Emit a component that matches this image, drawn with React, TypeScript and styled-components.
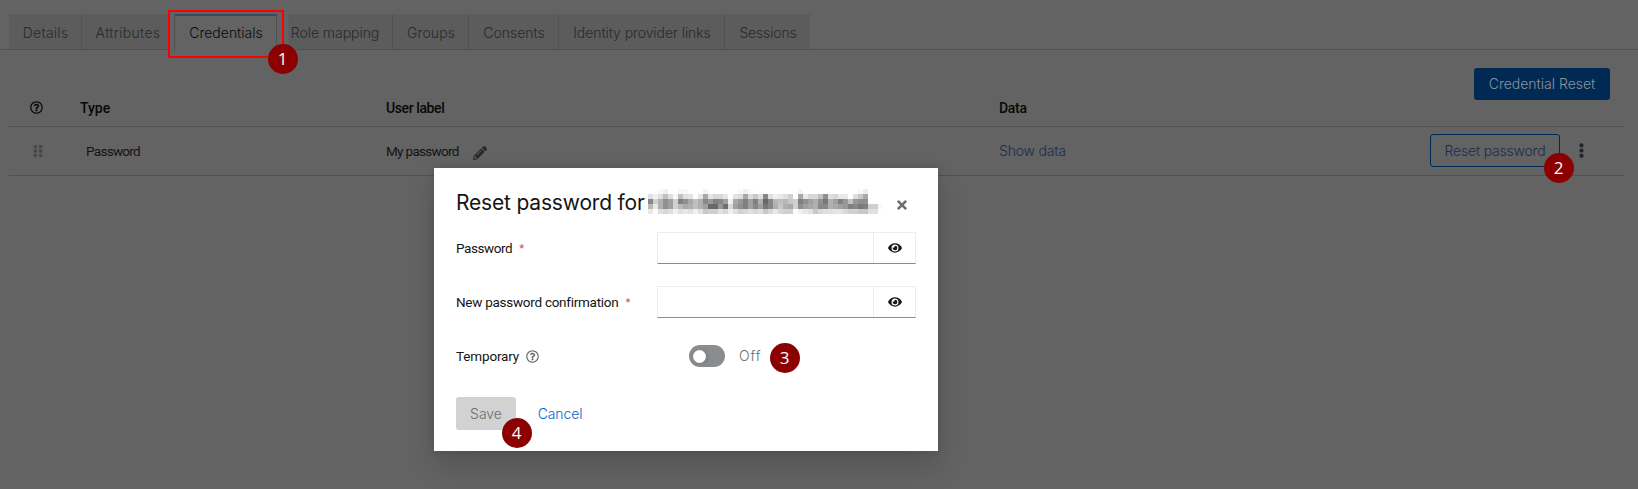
import React from 'react';
import styled, { createGlobalStyle, css } from 'styled-components';
import {
  FaEllipsisV,
  FaEye,
  FaGripVertical,
  FaPencilAlt,
  FaRegQuestionCircle,
  FaTimes,
} from 'react-icons/fa';

const GlobalStyle = createGlobalStyle`
  *, *::before, *::after { box-sizing: border-box; }
  body { margin: 0; background: #636363; }
  button, input { font: inherit; margin: 0; padding: 0; }
`;

const display = css`
  font-family: Inter, 'Liberation Sans', sans-serif;
  font-size: 14px;
  font-weight: 300;
`;

const Page = styled.div`
  position: relative;
  display: flex;
  flex-direction: column;
  height: 489px;
  overflow: hidden;
  background: #636363;
  color: #0b0b0b;
  font: 400 13.5px/20px Roboto, 'Liberation Sans', sans-serif;
`;

const Text = styled.span<{ $spacing?: number }>`
  letter-spacing: ${(p) => p.$spacing ?? 0}px;
  white-space: nowrap;
`;

const Tabs = styled.nav`
  display: flex;
  height: 50px;
  padding: 14px 0 0 9px;
  border-bottom: 1px solid #515151;
`;

const Tab = styled.button<{ $width: number; $active?: boolean; $last?: boolean }>`
  ${display}
  display: flex;
  align-items: center;
  justify-content: center;
  flex: none;
  width: ${(p) => p.$width}px;
  padding: 2px 0 0 1px;
  border: 0;
  border-right: ${(p) => (p.$last ? 0 : 1)}px solid #515151;
  background: #5c5c5c;
  color: #292a2c;

  ${Text} {
    position: relative;
    z-index: 2;
  }

  ${(p) =>
    p.$active &&
    css`
      position: relative;
      z-index: 2;
      height: 36px;
      padding-bottom: 2px;
      border-top: 2px solid #3a4a66;
      border-left: 1px solid #515151;
      background: #636363;
      color: #090909;
    `}
`;

const Highlight = styled.div`
  position: absolute;
  z-index: 1;
  left: 168px;
  top: 10px;
  width: 116px;
  height: 48px;
  border: 2px solid #ff0000;
  background: #636363;
  box-shadow: 5px 0 0 -0.5px #636363;
`;

const Toolbar = styled.div`
  display: flex;
  justify-content: flex-end;
  height: 41px;
  padding: 18px 28px 0 0;
`;

const Button = styled.button<{ $kind: 'primary' | 'outline' | 'disabled' | 'link'; $width: number }>`
  ${display}
  display: flex;
  align-items: center;
  justify-content: center;
  flex: none;
  width: ${(p) => p.$width}px;
  height: 33px;
  border: 0;
  border-radius: 3px;
  background: transparent;

  ${(p) =>
    p.$kind === 'primary' &&
    css`
      height: 32px;
      background: #002a53;
      color: #8c939b;
    `}
  ${(p) =>
    p.$kind === 'outline' &&
    css`
      padding-top: 1px;
      border: 1px solid #002a53;
      color: #1c2c4e;
    `}
  ${(p) =>
    p.$kind === 'disabled' &&
    css`
      background: #d2d2d2;
      color: #6a6e73;
    `}
  ${(p) =>
    p.$kind === 'link' &&
    css`
      color: #0066cc;
    `}
`;

const Table = styled.div`
  display: flex;
  flex-direction: column;
  margin: 0 14px 0 9px;
`;

const Row = styled.div<{ $header?: boolean }>`
  display: grid;
  grid-template-columns: 71px 306px 613px 1fr;
  align-items: center;
  height: ${(p) => (p.$header ? 36 : 49)}px;
  padding-bottom: 1px;
  border-bottom: 1px solid #515151;
  font-weight: ${(p) => (p.$header ? 500 : 400)};
  font-size: ${(p) => (p.$header ? 14 : 13.5)}px;
  color: ${(p) => (p.$header ? '#080808' : '#141414')};
`;

const IconCell = styled.span`
  display: flex;
  padding-left: 21px;
`;

const HelpCell = styled(IconCell)`
  padding-bottom: 2px;
`;

const GripCell = styled(IconCell)`
  padding-left: 22px;
  color: #484848;
`;

const TypeCell = styled.span`
  padding-left: 6px;
`;

const LabelCell = styled.span`
  display: flex;
  align-items: center;
  gap: 14px;
`;

const PencilBox = styled.span`
  display: flex;
  padding-top: 5px;
  color: #292a2c;
`;

const DataCell = styled.span`
  display: flex;
  align-items: center;
  justify-content: space-between;
`;

const DataLink = styled.a`
  ${display}
  color: #1c2c4e;
`;

const Actions = styled.span`
  display: flex;
  align-items: center;
  gap: 14px;
  padding-right: 35px;
  color: #252525;
`;

const Modal = styled.section`
  position: absolute;
  z-index: 3;
  left: 434px;
  top: 168px;
  width: 504px;
  height: 283px;
  padding: 19px 22px 0;
  background: #fff;
  color: #151515;
  box-shadow: 0 14px 28px rgba(0, 0, 0, 0.16), 0 0 7px rgba(0, 0, 0, 0.1);
`;

const ModalHeader = styled.header`
  display: flex;
  height: 34px;
`;

const Title = styled.h1`
  flex: none;
  width: 191px;
  margin: 0;
  font: 400 21px/31px Inter, 'Liberation Sans', sans-serif;
`;

const Mosaic = styled.svg`
  flex: none;
  margin: 2px 0 0 1px;
`;

const CloseButton = styled.button`
  display: flex;
  align-self: flex-start;
  margin: 11px 0 0 12px;
  border: 0;
  background: none;
  color: #6a6e73;
`;

const Field = styled.div`
  display: flex;
  align-items: center;
  height: 54px;
`;

const FieldLabel = styled.label`
  display: flex;
  align-items: center;
  width: 201px;
`;

const Required = styled.span`
  padding: 0 0 1px 7px;
  color: #d4483c;
  font-size: 11.5px;
`;

const HelpIcon = styled.span`
  display: flex;
  padding-left: 7px;
  color: #6a6e73;
`;

const InputGroup = styled.div`
  display: flex;
  width: 259px;
  height: 32px;
  border: 1px solid #ededed;
  border-bottom-color: #8a8d90;
`;

const Input = styled.input`
  width: 215px;
  border: 0;
  outline: 0;
  background: transparent;
`;

const Reveal = styled.button`
  display: flex;
  align-items: center;
  justify-content: center;
  flex: 1;
  border: 0;
  border-left: 1px solid #ededed;
  background: transparent;
  color: #151515;
`;

const Toggle = styled.span`
  display: flex;
  align-items: center;
  width: 36px;
  height: 22px;
  margin-left: 32px;
  padding-left: 4px;
  border-radius: 11px;
  background: #8a8d90;

  &::after {
    content: '';
    width: 13px;
    height: 13px;
    border-radius: 50%;
    background: #fff;
    box-shadow: 1px 1px 5px rgba(0, 0, 0, 0.16);
  }
`;

const ToggleText = styled.span`
  ${display}
  margin-left: 14px;
  color: #6a6e73;
`;

const Footer = styled.footer`
  display: flex;
  gap: 7px;
  padding-top: 14px;
`;

const Badge = styled.span<{ $x: number; $y: number }>`
  position: absolute;
  z-index: 4;
  left: ${(p) => p.$x}px;
  top: ${(p) => p.$y}px;
  display: flex;
  align-items: center;
  justify-content: center;
  width: 30px;
  height: 30px;
  border-radius: 50%;
  background: #8b0000;
  color: #fff;
  font: 400 17px/30px 'Open Sans', 'Liberation Sans', sans-serif;
`;

/* Grey level of every cell of the pixelated user name, two hex digits each. */
const nameCells = [
  'fffff8f0fffff8f8fffffff5fffffffffffffaf0fafffffffffffffffffff5fffffffffffffffffffffff8eeffffff',
  'e0f0e0c0e0f8c0e0e4fce6a8e4d8d8e6ffe4dca8dcc8e088e0f0e8e0d0ffa8e8d8d8c090e0d8e8e8ffdcc8a8ffffff',
  '88d0b090a0d08090a8c0b088988088a0f0a89880a080b06888b8c0b8c8d08090a0b09078b0a08098c0989090ffffff',
  'b8e8b090a0d0b8a8b0c0b0a068689870d8a09080a088a07888b0c8b0a8d090a0a8b08888b0a8a09880887880d0d0f8',
  'e8fce0d8e0f0e0e8e0f0e0c8d0d0e0d8f0e0d0d8e0d8e0c8d8e8d8d0d0fcf0e8e0c8d8e0e0e4e4d8d0d0c8c8e0e0ff',
];

function RedactedName() {
  return (
    <Mosaic width="235" height="25" viewBox="0 0 47 5" shapeRendering="crispEdges">
      {nameCells.map((row, y) =>
        (row.match(/../g) ?? []).map((v, x) => (
          <rect key={`${x}-${y}`} x={x} y={y} width="1" height="1" fill={`#${v}${v}${v}`} />
        )),
      )}
    </Mosaic>
  );
}

function PasswordField({ label, spacing }: { label: string; spacing: number }) {
  return (
    <Field>
      <FieldLabel>
        <Text $spacing={spacing}>{label}</Text>
        <Required>*</Required>
      </FieldLabel>
      <InputGroup>
        <Input type="password" />
        <Reveal>
          <FaEye size={14} />
        </Reveal>
      </InputGroup>
    </Field>
  );
}

const tabs = [
  { label: 'Details', width: 73, spacing: 0.2 },
  { label: 'Attributes', width: 92, spacing: 0.3 },
  { label: 'Credentials', width: 103, spacing: 0 },
  { label: 'Role mapping', width: 116, spacing: -0.05 },
  { label: 'Groups', width: 76, spacing: 0.1 },
  { label: 'Consents', width: 90, spacing: 0 },
  { label: 'Identity provider links', width: 166, spacing: -0.08 },
  { label: 'Sessions', width: 85, spacing: -0.15, last: true },
];

export default function App() {
  return (
    <>
      <GlobalStyle />
      <Page>
        <Tabs>
          {tabs.map((t) => (
            <Tab key={t.label} $width={t.width} $active={t.label === 'Credentials'} $last={t.last}>
              <Text $spacing={t.spacing}>{t.label}</Text>
            </Tab>
          ))}
        </Tabs>
        <Highlight />

        <Toolbar>
          <Button $kind="primary" $width={136}>
            <Text>Credential Reset</Text>
          </Button>
        </Toolbar>

        <Table>
          <Row $header>
            <HelpCell>
              <FaRegQuestionCircle size={13} />
            </HelpCell>
            <Text>Type</Text>
            <Text $spacing={-0.4}>User label</Text>
            <Text $spacing={-0.3}>Data</Text>
          </Row>
          <Row>
            <GripCell>
              <FaGripVertical size={14} />
            </GripCell>
            <TypeCell>
              <Text $spacing={-0.7}>Password</Text>
            </TypeCell>
            <LabelCell>
              <Text $spacing={-0.68}>My password</Text>
              <PencilBox>
                <FaPencilAlt size={14} />
              </PencilBox>
            </LabelCell>
            <DataCell>
              <DataLink>
                <Text $spacing={-0.2}>Show data</Text>
              </DataLink>
              <Actions>
                <Button $kind="outline" $width={130}>
                  <Text $spacing={-0.2}>Reset password</Text>
                </Button>
                <FaEllipsisV size={15} />
              </Actions>
            </DataCell>
          </Row>
        </Table>

        <Modal>
          <ModalHeader>
            <Title>
              <Text $spacing={-0.18}>Reset password for</Text>
            </Title>
            <RedactedName />
            <CloseButton>
              <FaTimes size={14} />
            </CloseButton>
          </ModalHeader>
          <PasswordField label="Password" spacing={-0.42} />
          <PasswordField label="New password confirmation" spacing={-0.27} />
          <Field>
            <FieldLabel>
              <Text $spacing={-0.15}>Temporary</Text>
              <HelpIcon>
                <FaRegQuestionCircle size={13} />
              </HelpIcon>
            </FieldLabel>
            <Toggle />
            <ToggleText>
              <Text $spacing={0.8}>Off</Text>
            </ToggleText>
          </Field>
          <Footer>
            <Button $kind="disabled" $width={60}>
              <Text>Save</Text>
            </Button>
            <Button $kind="link" $width={74}>
              <Text $spacing={-0.1}>Cancel</Text>
            </Button>
          </Footer>
        </Modal>

        <Badge $x={267.5} $y={43.5}>1</Badge>
        <Badge $x={1543.5} $y={152.5}>2</Badge>
        <Badge $x={769.5} $y={342.5}>3</Badge>
        <Badge $x={501.5} $y={417.5}>4</Badge>
      </Page>
    </>
  );
}
